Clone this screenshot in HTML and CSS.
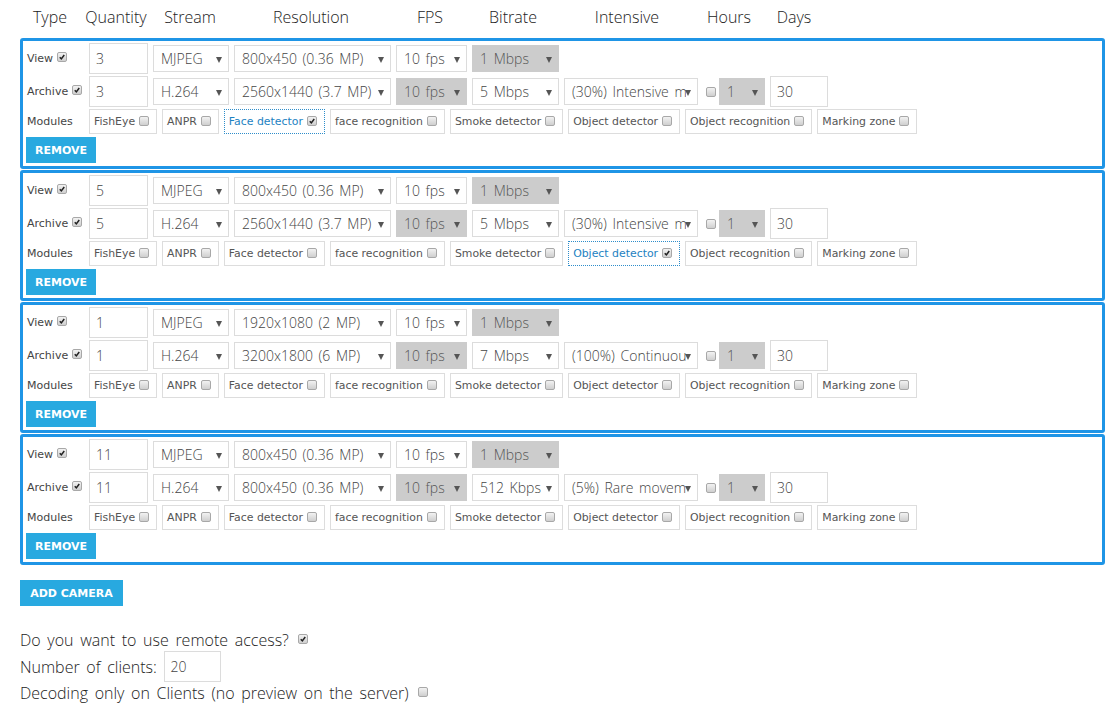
FILE: index.html
```html
<!DOCTYPE html>
<html>
<head>
<meta charset="utf-8">
<link rel="stylesheet" href="styles.css">
</head>
<body>
<div class="page">
  <div class="head">
    <div class="h h-type">Type</div>
    <div class="h h-qty">Quantity</div>
    <div class="h h-stream">Stream</div>
    <div class="h h-res">Resolution</div>
    <div class="h h-fps">FPS</div>
    <div class="h h-bit">Bitrate</div>
    <div class="h h-int">Intensive</div>
    <div class="h h-hours">Hours</div>
    <div class="h h-days">Days</div>
  </div>

  <!-- camera 1 -->
  <div class="cam">
    <div class="row">
      <div class="lbl">View <span class="cb on"><svg viewBox="0 0 10 10"><path d="M2.2 5.2 L4.2 7.4 L7.8 2.6"/></svg></span></div>
      <div class="inp qty">3</div>
      <div class="sel w-stream"><span class="t">MJPEG</span><i class="arr"></i></div>
      <div class="sel w-res"><span class="t">800x450 (0.36 MP)</span><i class="arr"></i></div>
      <div class="sel w-fps"><span class="t">10 fps</span><i class="arr"></i></div>
      <div class="sel w-bit dis"><span class="t">1 Mbps</span><i class="arr"></i></div>
    </div>
    <div class="row">
      <div class="lbl">Archive <span class="cb on"><svg viewBox="0 0 10 10"><path d="M2.2 5.2 L4.2 7.4 L7.8 2.6"/></svg></span></div>
      <div class="inp qty">3</div>
      <div class="sel w-stream"><span class="t">H.264</span><i class="arr"></i></div>
      <div class="sel w-res"><span class="t">2560x1440 (3.7 MP)</span><i class="arr"></i></div>
      <div class="sel w-fps dis"><span class="t">10 fps</span><i class="arr"></i></div>
      <div class="sel w-bit"><span class="t">5 Mbps</span><i class="arr"></i></div>
      <div class="sel w-int"><span class="t">(30%) Intensive mode</span><i class="arr"></i></div>
      <span class="cb hcb"></span>
      <div class="sel w-hours dis"><span class="t">1</span><i class="arr"></i></div>
      <div class="inp days">30</div>
    </div>
    <div class="row mods">
      <div class="lbl">Modules</div>
      <div class="mod">FishEye<span class="cb"></span></div>
      <div class="mod">ANPR<span class="cb"></span></div>
      <div class="mod act">Face detector<span class="cb on"><svg viewBox="0 0 10 10"><path d="M2.2 5.2 L4.2 7.4 L7.8 2.6"/></svg></span></div>
      <div class="mod">face recognition<span class="cb"></span></div>
      <div class="mod">Smoke detector<span class="cb"></span></div>
      <div class="mod">Object detector<span class="cb"></span></div>
      <div class="mod">Object recognition<span class="cb"></span></div>
      <div class="mod">Marking zone<span class="cb"></span></div>
    </div>
    <div class="btn remove">REMOVE</div>
  </div>

  <!-- camera 2 -->
  <div class="cam">
    <div class="row">
      <div class="lbl">View <span class="cb on"><svg viewBox="0 0 10 10"><path d="M2.2 5.2 L4.2 7.4 L7.8 2.6"/></svg></span></div>
      <div class="inp qty">5</div>
      <div class="sel w-stream"><span class="t">MJPEG</span><i class="arr"></i></div>
      <div class="sel w-res"><span class="t">800x450 (0.36 MP)</span><i class="arr"></i></div>
      <div class="sel w-fps"><span class="t">10 fps</span><i class="arr"></i></div>
      <div class="sel w-bit dis"><span class="t">1 Mbps</span><i class="arr"></i></div>
    </div>
    <div class="row">
      <div class="lbl">Archive <span class="cb on"><svg viewBox="0 0 10 10"><path d="M2.2 5.2 L4.2 7.4 L7.8 2.6"/></svg></span></div>
      <div class="inp qty">5</div>
      <div class="sel w-stream"><span class="t">H.264</span><i class="arr"></i></div>
      <div class="sel w-res"><span class="t">2560x1440 (3.7 MP)</span><i class="arr"></i></div>
      <div class="sel w-fps dis"><span class="t">10 fps</span><i class="arr"></i></div>
      <div class="sel w-bit"><span class="t">5 Mbps</span><i class="arr"></i></div>
      <div class="sel w-int"><span class="t">(30%) Intensive mode</span><i class="arr"></i></div>
      <span class="cb hcb"></span>
      <div class="sel w-hours dis"><span class="t">1</span><i class="arr"></i></div>
      <div class="inp days">30</div>
    </div>
    <div class="row mods">
      <div class="lbl">Modules</div>
      <div class="mod">FishEye<span class="cb"></span></div>
      <div class="mod">ANPR<span class="cb"></span></div>
      <div class="mod">Face detector<span class="cb"></span></div>
      <div class="mod">face recognition<span class="cb"></span></div>
      <div class="mod">Smoke detector<span class="cb"></span></div>
      <div class="mod act">Object detector<span class="cb on"><svg viewBox="0 0 10 10"><path d="M2.2 5.2 L4.2 7.4 L7.8 2.6"/></svg></span></div>
      <div class="mod">Object recognition<span class="cb"></span></div>
      <div class="mod">Marking zone<span class="cb"></span></div>
    </div>
    <div class="btn remove">REMOVE</div>
  </div>

  <!-- camera 3 -->
  <div class="cam">
    <div class="row">
      <div class="lbl">View <span class="cb on"><svg viewBox="0 0 10 10"><path d="M2.2 5.2 L4.2 7.4 L7.8 2.6"/></svg></span></div>
      <div class="inp qty">1</div>
      <div class="sel w-stream"><span class="t">MJPEG</span><i class="arr"></i></div>
      <div class="sel w-res"><span class="t">1920x1080 (2 MP)</span><i class="arr"></i></div>
      <div class="sel w-fps"><span class="t">10 fps</span><i class="arr"></i></div>
      <div class="sel w-bit dis"><span class="t">1 Mbps</span><i class="arr"></i></div>
    </div>
    <div class="row">
      <div class="lbl">Archive <span class="cb on"><svg viewBox="0 0 10 10"><path d="M2.2 5.2 L4.2 7.4 L7.8 2.6"/></svg></span></div>
      <div class="inp qty">1</div>
      <div class="sel w-stream"><span class="t">H.264</span><i class="arr"></i></div>
      <div class="sel w-res"><span class="t">3200x1800 (6 MP)</span><i class="arr"></i></div>
      <div class="sel w-fps dis"><span class="t">10 fps</span><i class="arr"></i></div>
      <div class="sel w-bit"><span class="t">7 Mbps</span><i class="arr"></i></div>
      <div class="sel w-int"><span class="t">(100%) Continuous</span><i class="arr"></i></div>
      <span class="cb hcb"></span>
      <div class="sel w-hours dis"><span class="t">1</span><i class="arr"></i></div>
      <div class="inp days">30</div>
    </div>
    <div class="row mods">
      <div class="lbl">Modules</div>
      <div class="mod">FishEye<span class="cb"></span></div>
      <div class="mod">ANPR<span class="cb"></span></div>
      <div class="mod">Face detector<span class="cb"></span></div>
      <div class="mod">face recognition<span class="cb"></span></div>
      <div class="mod">Smoke detector<span class="cb"></span></div>
      <div class="mod">Object detector<span class="cb"></span></div>
      <div class="mod">Object recognition<span class="cb"></span></div>
      <div class="mod">Marking zone<span class="cb"></span></div>
    </div>
    <div class="btn remove">REMOVE</div>
  </div>

  <!-- camera 4 -->
  <div class="cam">
    <div class="row">
      <div class="lbl">View <span class="cb on"><svg viewBox="0 0 10 10"><path d="M2.2 5.2 L4.2 7.4 L7.8 2.6"/></svg></span></div>
      <div class="inp qty">11</div>
      <div class="sel w-stream"><span class="t">MJPEG</span><i class="arr"></i></div>
      <div class="sel w-res"><span class="t">800x450 (0.36 MP)</span><i class="arr"></i></div>
      <div class="sel w-fps"><span class="t">10 fps</span><i class="arr"></i></div>
      <div class="sel w-bit dis"><span class="t">1 Mbps</span><i class="arr"></i></div>
    </div>
    <div class="row">
      <div class="lbl">Archive <span class="cb on"><svg viewBox="0 0 10 10"><path d="M2.2 5.2 L4.2 7.4 L7.8 2.6"/></svg></span></div>
      <div class="inp qty">11</div>
      <div class="sel w-stream"><span class="t">H.264</span><i class="arr"></i></div>
      <div class="sel w-res"><span class="t">800x450 (0.36 MP)</span><i class="arr"></i></div>
      <div class="sel w-fps dis"><span class="t">10 fps</span><i class="arr"></i></div>
      <div class="sel w-bit"><span class="t">512 Kbps</span><i class="arr"></i></div>
      <div class="sel w-int"><span class="t">(5%) Rare movement</span><i class="arr"></i></div>
      <span class="cb hcb"></span>
      <div class="sel w-hours dis"><span class="t">1</span><i class="arr"></i></div>
      <div class="inp days">30</div>
    </div>
    <div class="row mods">
      <div class="lbl">Modules</div>
      <div class="mod">FishEye<span class="cb"></span></div>
      <div class="mod">ANPR<span class="cb"></span></div>
      <div class="mod">Face detector<span class="cb"></span></div>
      <div class="mod">face recognition<span class="cb"></span></div>
      <div class="mod">Smoke detector<span class="cb"></span></div>
      <div class="mod">Object detector<span class="cb"></span></div>
      <div class="mod">Object recognition<span class="cb"></span></div>
      <div class="mod">Marking zone<span class="cb"></span></div>
    </div>
    <div class="btn remove">REMOVE</div>
  </div>

  <div class="btn add">ADD CAMERA</div>

  <div class="extra">
    <div class="line">Do you want to use remote access? <span class="cb on"><svg viewBox="0 0 10 10"><path d="M2.2 5.2 L4.2 7.4 L7.8 2.6"/></svg></span></div>
    <div class="line clients">Number of clients: <div class="inp cl">20</div></div>
    <div class="line">Decoding only on Clients (no preview on the server) <span class="cb"></span></div>
  </div>
</div>
</body>
</html>
```
FILE: styles.css
```css
html, body {
  margin: 0;
  padding: 0;
  background: #fff;
}
.page {
  padding-left: 20px;
  width: 1085px;
  font-family: "Open Sans", "DejaVu Sans", sans-serif;
  color: #333;
}
.head {
  display: flex;
  height: 38px;
  align-items: flex-start;
}
.h {
  font-size: 16px;
  font-weight: 300;
  line-height: 35px;
  color: #222;
  text-align: center;
  white-space: nowrap;
}
.h-type { width: 60px; }
.h-qty { width: 72px; }
.h-stream { width: 76px; }
.h-res { width: 166px; }
.h-fps { width: 72px; }
.h-bit { width: 94px; }
.h-int { width: 134px; }
.h-hours { width: 70px; }
.h-days { width: 60px; }

.cam {
  border: 3px solid #1f95e6;
  border-radius: 3px;
  height: 123px;
  padding: 2px 3px 0 3px;
  margin-bottom: 1px;
  box-sizing: content-box;
}
.row {
  display: flex;
  align-items: center;
  gap: 5px;
  height: 31px;
  margin-bottom: 2px;
}
.row.mods {
  height: 25px;
  margin-bottom: 3px;
}
.lbl {
  width: 58px;
  flex: none;
  font-family: "DejaVu Sans", Verdana, sans-serif;
  font-size: 11px;
  color: #444;
  padding-left: 1px;
  box-sizing: border-box;
  display: flex;
  align-items: center;
  white-space: pre;
}
.lbl .cb { margin-top: -3px; }

.inp, .sel {
  box-sizing: border-box;
  border: 1px solid #dcdcdc;
  font-family: "Open Sans", sans-serif;
  font-weight: 300;
  font-size: 14px;
  word-spacing: 2px;
  color: #444;
  display: flex;
  align-items: center;
  flex: none;
  white-space: nowrap;
  background: #fff;
}
.inp {
  height: 31px;
  padding-left: 6px;
}
.qty { width: 59px; }
.days { width: 58px; }
.sel {
  height: 27px;
  padding-left: 7px;
  position: relative;
}
.sel .t {
  overflow: hidden;
  display: block;
  flex: 1;
  margin-right: 11px;
}
.sel .arr {
  position: absolute;
  right: 6px;
  top: 11px;
  width: 0;
  height: 0;
  border-left: 3px solid transparent;
  border-right: 3px solid transparent;
  border-top: 6px solid #555;
}
.sel.dis {
  background: #cccccc;
  border-color: #cccccc;
  color: #555;
}
.w-stream { width: 76px; }
.w-res { width: 157px; }
.w-fps { width: 71px; }
.w-bit { width: 87px; }
.w-int { width: 134px; }
.w-hours { width: 46px; }
.hcb { margin-left: 3px; margin-right: -2px; }

.cb {
  display: inline-block;
  flex: none;
  width: 10px;
  height: 10px;
  box-sizing: border-box;
  border: 1px solid #a8a8a8;
  border-radius: 2px;
  background: linear-gradient(#f2f2f2, #cfcfcf);
  vertical-align: middle;
}
.cb svg {
  display: block;
  width: 8px;
  height: 8px;
}
.cb svg path {
  fill: none;
  stroke: #222;
  stroke-width: 1.9;
}

.mod {
  box-sizing: border-box;
  height: 25px;
  border: 1px solid #dddddd;
  padding: 0 7px 0 4px;
  display: flex;
  align-items: center;
  font-family: "DejaVu Sans", Verdana, sans-serif;
  font-size: 10.9px;
  color: #555;
  white-space: nowrap;
  flex: none;
}
.mod .cb { margin-left: 4px; margin-top: -2px; }
.mod.act {
  border: 1px dotted #2e8dca;
  color: #1d82c2;
}

.btn {
  display: flex;
  align-items: center;
  justify-content: center;
  background: #28a9e0;
  color: #fff;
  font-family: "DejaVu Sans", Verdana, sans-serif;
  font-weight: bold;
  font-size: 11px;
  height: 26px;
  box-sizing: border-box;
}
.remove { width: 70px; }
.add {
  width: 103px;
  margin-top: 15px;
}
.extra {
  margin-top: 23px;
  font-family: "Open Sans", sans-serif;
  font-weight: 300;
  font-size: 16px;
  word-spacing: 2.5px;
  color: #222;
}
.line {
  display: flex;
  align-items: center;
  height: 22px;
  white-space: pre;
}
.line .cb { margin-left: 3px; margin-top: -2px; }
.clients { height: 31px; }
.inp.cl {
  width: 57px;
  margin-left: 0;
  font-size: 14px;
}
```
